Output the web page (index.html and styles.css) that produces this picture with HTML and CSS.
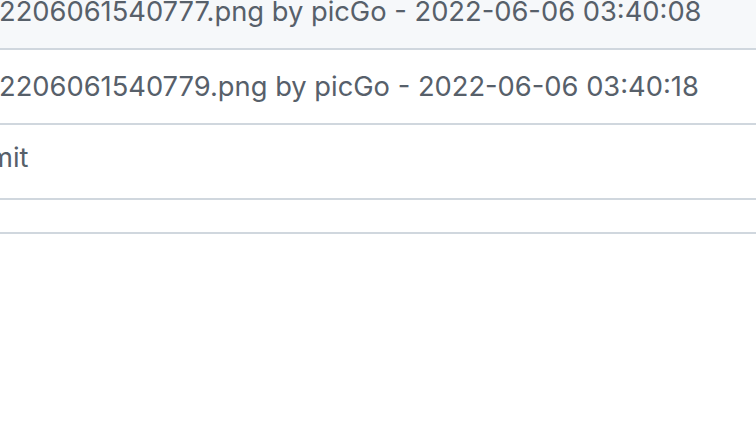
FILE: index.html
```html
<!DOCTYPE html>
<html lang="en">
<head>
<meta charset="utf-8">
<title>Commits</title>
<link rel="stylesheet" href="styles.css">
</head>
<body>
<div class="list">
  <div class="row row-highlight">
    <span class="msg msg-upload">2206061540777.png by picGo - 2022-06-06 03:40:08</span>
  </div>
  <div class="row">
    <span class="msg msg-upload">2206061540779.png by picGo - 2022-06-06 03:40:18</span>
  </div>
  <div class="row row-init">
    <span class="msg msg-init">Initial commit</span>
  </div>
  <div class="row row-short"></div>
</div>
</body>
</html>
```

FILE: styles.css
```css
html, body {
  margin: 0;
  padding: 0;
  background: #ffffff;
}

body {
  font-family: Inter, "Noto Sans", "Liberation Sans", sans-serif;
  color: #57606a;
  overflow: hidden;
  width: 756px;
  height: 442px;
}

.list {
  margin-top: -25px;
}

.row {
  height: 73px;
  border-bottom: 2px solid #d0d7de;
  display: flex;
  align-items: center;
  white-space: nowrap;
  overflow: hidden;
}

.row-highlight {
  background: #f6f8fa;
}

.row-init {
  padding-bottom: 7px;
  box-sizing: border-box;
  height: 75px;
}

.row-short {
  height: 32px;
}

.msg {
  font-size: 27.3px;
  line-height: 42px;
}

.msg-upload {
  margin-left: -1px;
}

.msg-init {
  margin-left: -142px;
}
```
